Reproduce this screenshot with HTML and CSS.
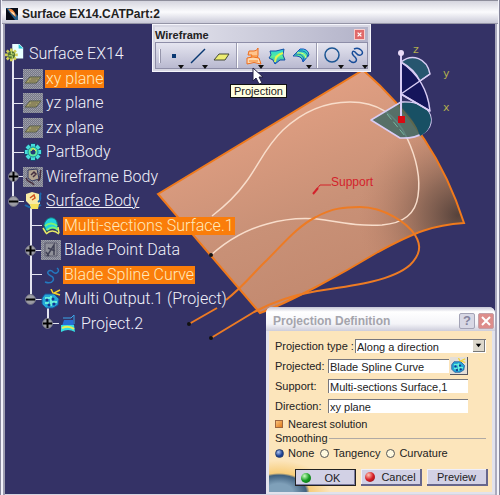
FILE: index.html
```html
<!DOCTYPE html>
<html lang="en">
<head>
<meta charset="utf-8">
<title>Surface EX14.CATPart:2</title>
<link rel="stylesheet" href="styles.css">
</head>
<body>
<svg class="defs" aria-hidden="true">
  <defs>
    <pattern id="dither" width="2" height="2" patternUnits="userSpaceOnUse"><rect width="2" height="2" fill="#77798b"/><rect width="1" height="1" fill="#a2a3aa"/><rect x="1" y="1" width="1" height="1" fill="#94969f"/></pattern>
    <linearGradient id="sheet" x1="0" y1="0" x2="0" y2="1"><stop offset="0" stop-color="#20cfe0"/><stop offset=".5" stop-color="#58ee98"/><stop offset="1" stop-color="#207ee0"/></linearGradient>
    <symbol id="i-plane" viewBox="0 0 20 20"><rect width="20" height="20" fill="url(#dither)"/><path d="M2 14 7 8h11l-5 6z" fill="#a5a06c" stroke="#555843"/><path d="M6 12h7M8 10h7" stroke="#746b4f"/></symbol>
    <symbol id="i-gear" viewBox="0 0 20 20"><path d="M10 1v18M1 10h18M4 4l12 12M16 4 4 16" stroke="#164b70" stroke-width="5"/><path d="M10 2v16M2 10h16M4 4l12 12M16 4 4 16" stroke="#48ddda" stroke-width="4"/><circle cx="10" cy="10" r="5" fill="#62eaa0" stroke="#148a96"/><circle cx="10" cy="10" r="2.500" fill="#263775"/><path d="M8 9l2-3 3 3" stroke="#ece83e" fill="none"/></symbol>
    <symbol id="i-expand" viewBox="0 0 11 11"><circle cx="5.500" cy="5.500" r="5" fill="#9c9ca4" stroke="#6d6d80"/><path d="M1 5.500h9M5.500 1v9" stroke="#000" stroke-width="2"/></symbol>
    <symbol id="i-collapse" viewBox="0 0 11 11"><circle cx="5.500" cy="5.500" r="5" fill="#9c9ca4" stroke="#6d6d80"/><path d="M1 5.500h9" stroke="#000" stroke-width="2"/></symbol>
    <symbol id="i-output" viewBox="0 0 20 20"><path d="M4 5h9l5 5-1 6-5 3H5l-4-4V9z" fill="#25a8d8" stroke="#1b4f96"/><path d="M4 9h5M10 13h6M4 14h4M10 7v10" stroke="#68f0da" stroke-width="2"/><g fill="#16358c"><circle cx="6" cy="11" r="1.500"/><circle cx="12" cy="10" r="1.500"/><circle cx="8" cy="16" r="1.500"/><circle cx="13" cy="15" r="1.500"/></g><path d="M19 1 13 4l6 2M10 0l2 4" stroke="#f5d22b" stroke-width="1.500" fill="none"/></symbol>
  </defs>
</svg>
<div class="window">
  <header class="titlebar">
    <svg class="app-icon" viewBox="0 0 12 12"><rect width="12" height="12" fill="#070b16"/><path d="M0 0h4l8 8v4H9z" fill="#245d87"/><path d="M2 1c4-1 7 2 8 8L6 6z" fill="#f68a3d"/><path d="M4 3l4 2 1 3z" fill="#fff3d2"/></svg>
    <h1>Surface EX14.CATPart:2</h1>
  </header>
  <main class="viewport">
    <svg class="scene" viewBox="5 24 490 466" preserveAspectRatio="xMinYMin meet" role="img" aria-label="Blade surface with projected spline">
      <defs>
        <linearGradient id="skin" x1="230" y1="110" x2="300" y2="300" gradientUnits="userSpaceOnUse"><stop offset="0" stop-color="#e2a083"/><stop offset=".6" stop-color="#c99177"/><stop offset="1" stop-color="#c38a70"/></linearGradient>
        <radialGradient id="shade" cx="458" cy="215" r="100" gradientUnits="userSpaceOnUse"><stop offset="0" stop-color="#4a3a35" stop-opacity=".9"/><stop offset=".35" stop-color="#6e5347" stop-opacity=".65"/><stop offset="1" stop-color="#b88067" stop-opacity="0"/></radialGradient>
        <path id="blade" d="M158 194 363 70Q435 132 464 223C433 225 415 232 378 252C340 275 290 302 260 313Z"/>
      </defs>
      <use href="#blade" fill="url(#skin)"/>
      <use href="#blade" fill="url(#shade)" stroke="#f07a1c" stroke-width="2"/>
      <path d="M211 255C230 238 248 229 267 224C288 218 305 217 325 220C350 224 362 226 382 225C407 223 416 211 418 196C421 176 415 155 407 138C397 116 379 102 350 102C320 102 298 116 283 130C266 146 258 166 246 182C236 196 225 206 212 216" fill="none" stroke="#f8ddcb" stroke-width="1.500"/>
      <path d="M189 324 217 308M226 300C245 285 254 272 267 260C284 243 298 226 316 217C332 208 345 207 360 207C385 207 408 224 415 235C422 246 420 255 410 265C392 281 352 286 317 291C287 296 267 305 254 312L211 338" fill="none" stroke="#ed7b24" stroke-width="2"/>
      <circle cx="211" cy="255" r="2" fill="#111"/><circle cx="189" cy="324" r="2" fill="#111"/><circle cx="211" cy="338" r="2" fill="#111"/>
      <path d="M313 194l5-6" stroke="#d3222b" stroke-width="2"/><path d="M316 190l4-5h11" stroke="#d3222b" fill="none"/>
      <text class="support" x="331" y="186">Support</text>
      <g stroke="#d9cdf5" stroke-width="1.500" stroke-linejoin="round">
        <path d="M401 102 371 120 400 138C420 139 432 130 431 119C430 108 418 101 401 102Z" fill="#25605f" fill-opacity=".72"/>
        <path d="M403 103C421 101 431 111 431 120C430 129 426 133 420 136Q415 120 403 108Z" fill="#185064" stroke="none"/>
        <path d="M401 62Q427 80 430 111L401 94Z" fill="#15155b"/>
        <path d="M401 62C412 53 427 58 430 74L420 81Q414 69 401 62Z" fill="#27566f"/>
        <path d="M430 74 401 94 430 111" fill="none"/>
        <path d="M401 53v64" stroke-width="2"/>
      </g>
      <path d="M387 114 405 136" stroke="#78b7a1" stroke-dasharray="7 3"/>
      <circle cx="401" cy="53" r="3" fill="#eadcf8"/><rect x="398" y="116" width="7" height="7" fill="#d90a12"/>
      <g class="axis"><text x="413" y="53">z</text><text x="443" y="77">y</text><text x="443" y="111">x</text></g>
    </svg>

    <ul class="tree">
      <li class="root"><svg viewBox="0 0 22 22"><path d="M8 0h8l4 4v12H8z" fill="#e8ffff"/><path d="M15 0v5h5" fill="#26c6d7"/><g stroke="#d1cf54" stroke-width="3"><path d="M7 5v14M0 12h14M2 7l10 10M12 7 2 17"/></g><circle cx="7" cy="12" r="4" fill="#4c7136"/><path d="M4 13h4v3M10 11H7V8" stroke="#d8f279" fill="none"/></svg><span>Surface EX14</span></li>
      <li class="l1"><svg><use href="#i-plane"/></svg><span class="selected">xy plane</span></li>
      <li class="l1"><svg><use href="#i-plane"/></svg><span>yz plane</span></li>
      <li class="l1"><svg><use href="#i-plane"/></svg><span>zx plane</span></li>
      <li class="l1"><svg><use href="#i-gear"/></svg><span>PartBody</span></li>
      <li class="l1"><svg class="knob"><use href="#i-expand"/></svg><svg viewBox="0 0 20 20"><rect width="20" height="20" fill="url(#dither)"/><path d="M5 3l9-1 2 10-7 2-4-3z" fill="#b3a591" stroke="#353b61"/><path d="M8 8l3-3 2 2-3 3M3 11c2 6 5 2 8 7M18 3c-2 4 1 8-3 11" stroke="#452f40" stroke-width="1.500" fill="none"/></svg><span>Wireframe Body</span></li>
      <li class="l1"><svg class="knob"><use href="#i-collapse"/></svg><svg viewBox="0 0 20 20"><path d="M3 3l6-2 7 2 1 10-10 1-4-4z" fill="#f8eba5"/><path d="M7 7l4-3 1 3-3 2" stroke="#cf5220" stroke-width="1.500" fill="none"/><path d="M2 14q7 5 16 0M18 2c-3 3 2 6-3 9" stroke="#1c69ae" stroke-width="2" fill="none"/><path d="M7 13h9l-1 5H8z" fill="#f4e15c"/></svg><span class="active">Surface Body</span></li>
      <li class="l2"><svg viewBox="0 0 20 20"><path d="M3 9C5 0 14 0 16 6l1 8q-5-4-12 1z" fill="#20cfe0" stroke="#137b78"/><path d="M4 10q6-5 12 0M6 14q6-5 11 0" stroke="#7cf173" stroke-width="2" fill="none"/><path d="M2 12l3 5M17 11l1 6M5 18q6-6 13 0" stroke="#e9eb65" stroke-width="1.500" fill="none"/></svg><span class="selected">Multi-sections Surface.1</span></li>
      <li class="l2"><svg class="knob"><use href="#i-expand"/></svg><svg viewBox="0 0 20 20"><rect width="20" height="20" fill="url(#dither)"/><path d="M4 3h12v13H4z" fill="#90919a" stroke="#5a5b6c"/><path d="M6 16l7-11v10M7 8l7 3M5 12l3 4" fill="none" stroke="#3f4054" stroke-width="1.500"/></svg><span>Blade Point Data</span></li>
      <li class="l2"><svg viewBox="0 0 20 20"><path d="M4 17C12 20 15 13 10 11C3 8 9 3 12 7C15 10 20 6 16 3" fill="none" stroke="#247ac0" stroke-width="1.500"/></svg><span class="selected">Blade Spline Curve</span></li>
      <li class="l2"><svg class="knob"><use href="#i-collapse"/></svg><svg><use href="#i-output"/></svg><span>Multi Output.1 (Project)</span></li>
      <li class="l3"><svg class="knob"><use href="#i-expand"/></svg><svg viewBox="0 0 20 20"><path d="M5 4h8M13 4l3-3v9" stroke="#3ba5e8" fill="none"/><path d="M6 6h9l1 6H4z" fill="#276ed6"/><path d="M3 11h13l1 7q-7-4-14 0z" fill="#36dde1"/><path d="M4 14q7-3 12 1" stroke="#e6ef54" stroke-width="2" fill="none"/></svg><span>Project.2</span></li>
    </ul>

    <section class="toolbar" aria-label="Wireframe">
      <header><h2>Wireframe</h2><button class="tool-close" aria-label="Close toolbar"><svg viewBox="0 0 8 8"><path d="M1 1l6 6M7 1 1 7" stroke="#fff" stroke-width="2"/></svg></button></header>
      <div class="tools">
        <i class="grip"></i>
        <button class="drop" aria-label="Point"><svg viewBox="0 0 18 18"><rect x="8" y="7" width="4" height="4" fill="#093872"/></svg></button>
        <button class="drop" aria-label="Line"><svg viewBox="0 0 18 18"><path d="M3 16 17 2" stroke="#093872" stroke-width="1.500"/></svg></button>
        <button aria-label="Plane"><svg viewBox="0 0 18 18"><path d="M2 13 7 7h10l-4 6z" fill="#eded72" stroke="#444936"/></svg></button>
        <i class="rule"></i>
        <button class="drop" aria-label="Projection"><svg viewBox="0 0 18 18"><path d="M5 4h5q3 0 4-3v7l-1 4H6l2-4H4z" fill="#ffc48d" stroke="#ed6d1d"/><path d="M3 11q6-2 12 0l2 6q-7-3-14 0z" fill="#ffd9b0" stroke="#ed6d1d"/><path d="M7 9h6M5 14h9" stroke="#f58225"/></svg></button>
        <button aria-label="Intersection"><svg viewBox="0 0 18 18"><path d="M2 4l6 0 8-2-1 6 2 5-5 0-5 4-2-4-4-2 2-3z" fill="url(#sheet)" stroke="#1750a6"/><path d="M7 15q0-7 8-9" stroke="#dff450" stroke-width="2" fill="none"/></svg></button>
        <button class="drop" aria-label="Parallel curve"><svg viewBox="0 0 18 18"><path d="M1 9 8 2q8-1 9 6l-6 7q-1-7-10-6z" fill="url(#sheet)" stroke="#1750b9"/><path d="M3 7q9-1 9 7M7 4q8-1 9 6" stroke="#1d65be" fill="none"/><path d="M5 6q8-1 9 5" stroke="#edf774" fill="none"/></svg></button>
        <i class="rule"></i>
        <button class="drop" aria-label="Circle"><svg viewBox="0 0 18 18"><circle cx="8" cy="8" r="7" fill="none" stroke="#1b5593" stroke-width="1.500"/></svg></button>
        <button class="drop" aria-label="Spline"><svg viewBox="0 0 18 18"><path d="M1 13C6 18 11 14 7 10C2 6 5 2 8 6C12 11 17 6 13 3Q10 0 6 2" fill="none" stroke="#174c99" stroke-width="1.500"/></svg></button>
      </div>
    </section>
    <svg class="cursor" viewBox="0 0 12 18"><path d="M1 1v13l3-3 3 6 3-1-3-6h4z" fill="#fff" stroke="#252344"/></svg>
    <div class="tooltip" role="tooltip">Projection</div>

    <form class="dialog" aria-labelledby="dialog-title">
      <header><h2 id="dialog-title">Projection Definition</h2><button type="button" class="help" aria-label="Help">?</button><button type="button" class="close" aria-label="Close"><svg viewBox="0 0 12 12"><path d="M2 2l8 8M10 2l-8 8" stroke="#fff" stroke-width="2"/></svg></button></header>
      <div class="body">
        <div class="row type"><label for="type">Projection type :</label><div class="select"><select id="type"><option>Along a direction</option></select><svg viewBox="0 0 12 12"><path d="M3 4h6L6 8z"/></svg></div></div>
        <div class="row"><label for="projected">Projected:</label><input id="projected" value="Blade Spline Curve"><button type="button" class="pick" aria-label="Multi output"><svg viewBox="0 0 20 20"><use href="#i-output"/></svg></button></div>
        <div class="row"><label for="support">Support:</label><input id="support" value="Multi-sections Surface,1"></div>
        <div class="row"><label for="direction">Direction:</label><input id="direction" value="xy plane"></div>
        <label class="check"><input type="checkbox" checked>Nearest solution</label>
        <fieldset><legend>Smoothing</legend><label><input type="radio" name="smooth" checked>None</label><label><input type="radio" name="smooth">Tangency</label><label><input type="radio" name="smooth">Curvature</label></fieldset>
        <footer><button type="submit" class="ok"><i class="dot green"></i>OK</button><button type="button"><i class="dot red"></i>Cancel</button><button type="button">Preview</button></footer>
      </div>
    </form>
  </main>
</div>
</body>
</html>
```
FILE: styles.css
```css
* { box-sizing: border-box; }
body { margin: 0; font-family: "Liberation Sans", Arial, sans-serif; font-size: 11px; color: #222; background: #b9b9c9; }
h1, h2, ul, fieldset { margin: 0; padding: 0; }
button { font: inherit; color: inherit; padding: 0; border: 0; }
svg { display: block; overflow: visible; }
.defs { position: absolute; width: 0; height: 0; }

.window { display: flex; flex-direction: column; height: 100vh; padding: 0 5px 1px; background: linear-gradient(90deg, #85859a 0 1px, #f2f2fa 1px 3px, #9d9db0 3px 5px, transparent 5px calc(100% - 5px), #aaaabd calc(100% - 5px) calc(100% - 3px), #f3f3fa calc(100% - 3px) calc(100% - 1px), #85859a calc(100% - 1px)), #d5d5e0; }
.titlebar { flex: none; display: flex; align-items: center; gap: 4px; height: 24px; margin: 0 -3px; padding: 3px 4px 0; background: linear-gradient(#8e8e9c 0 1px, #d5d5df 1px, #fbfbfd 50%, #ccccda 94%, #77778a); }
.app-icon { width: 12px; height: 12px; }
h1 { font-size: 12px; line-height: 18px; }
.viewport { position: relative; flex: 1; min-height: 0; overflow: hidden; background: #343266; }
.scene { position: absolute; inset: 0; width: 100%; height: 100%; }
.support { font: 12px "Liberation Sans", sans-serif; fill: #d3222b; }
.axis { font: 11px "DejaVu Sans", sans-serif; fill: #b1ad4d; }

.tree { position: relative; z-index: 0; display: grid; grid-auto-rows: 1fr; width: max-content; height: 294px; margin-top: 18px; list-style: none; font: 300 16px/18px Roboto, sans-serif; color: #f1f1fa; }
.tree li { position: relative; display: flex; align-items: center; gap: 2px; }
.tree li > svg { flex: none; width: 20px; height: 20px; }
.tree .l1 { padding-left: 18px; }
.tree .l2 { padding-left: 36px; }
.tree .l3 { padding-left: 53px; }
.tree li::before { content: ""; position: absolute; z-index: -1; top: -12px; bottom: 12px; width: 10px; border: solid #e4e4f0; border-width: 0 0 1px 2px; }
.tree .root::before { display: none; }
.tree .l1::before { left: 7px; }
.tree .l2::before { left: 25px; }
.tree .l3::before { left: 42px; }
.tree li > .knob { position: absolute; width: 11px; height: 11px; }
.l1 .knob { left: 3px; }
.l2 .knob { left: 20px; }
.l3 .knob { left: 37px; }
.tree span { padding: 0 1px; }
.tree .root span { padding-left: 2px; }
.tree .selected { background: #fa7d0a; color: #ffe9bb; }
.tree .active { text-decoration: underline; text-decoration-thickness: 1px; }

.toolbar { position: absolute; left: 147px; top: 0; width: 219px; height: 48px; padding: 2px; background: #d7d7e3; border: 1px solid #f5f5fc; }
.toolbar header { display: flex; justify-content: space-between; align-items: center; height: 15px; padding: 0 3px 0 0; background: linear-gradient(90deg, #e5e5ee, #b3b3c9); }
.toolbar h2 { font-size: 11px; line-height: 14px; }
.tool-close { width: 11px; height: 11px; padding: 2px; background: #e0696a; border: 1px solid #f7cfcf; }
.tools { display: flex; align-items: center; gap: 6px; height: 27px; border: 1px solid #8e8ea8; background: linear-gradient(#e5e5f0, #b9b9d0); }
.tools button { position: relative; width: 18px; height: 20px; background: none; }
.tools button svg { width: 18px; height: 18px; }
.tools .drop::after { content: ""; position: absolute; right: -2px; bottom: -3px; border: solid transparent; border-width: 4px 3px 0; border-top-color: #111; }
.grip { width: 2px; height: 14px; margin-left: 3px; margin-right: -3px; background: #f8f8fc; border-right: 1px solid #9595ab; }
.rule { width: 2px; height: 25px; background: #fff; border-left: 1px solid #9b9bb1; }
.cursor { position: absolute; left: 247px; top: 43px; width: 12px; height: 18px; }
.tooltip { position: absolute; left: 225px; top: 60px; padding: 0 3px; line-height: 12px; color: #222; background: #ffffe1; border: 1px solid #111; }

.dialog { position: absolute; right: 0; bottom: 0; width: 229px; padding: 0 3px 2px; border-radius: 6px 6px 0 0; background: #e2e2ec; }
.dialog header { display: flex; align-items: center; gap: 3px; height: 24px; padding: 3px 1px 0 7px; margin: 0 -3px; border-radius: 6px 6px 0 0; background: linear-gradient(#c5c5d5, #fff 20%, #f4f4f8 70%, #cdcddb); }
.dialog h2 { flex: 1; font-size: 12px; color: #a4a4ac; }
.dialog header button { width: 16px; height: 16px; border: 1px solid #a3a3b6; border-radius: 2px; }
.dialog .help { background: #d8d8e5; color: #84849d; font-weight: bold; font-size: 13px; line-height: 14px; }
.dialog .close { background: #dd8d8b; border-color: #c4a0a8; padding: 1px; }
.body { padding: 5px 6px 6px; background: radial-gradient(ellipse 34px 21px at 10px 100%, #7fa0b9 0 40%, #41617e 80%, #f7cd7b 90%, transparent 150%), #fce5bb; }
.row { display: flex; align-items: center; height: 20px; padding-right: 18px; }
.row.type { padding-right: 0; }
.row label { width: 53px; }
.row.type label { width: 80px; white-space: nowrap; }
.row input, .row select { flex: 1; min-width: 0; width: 100%; height: 14px; padding: 0 1px; font: 11px "Liberation Sans", sans-serif; color: #222; background: #fff; border: solid #77777d; border-width: 1px 0 0 1px; border-radius: 0; appearance: none; }
.select { position: relative; flex: 1; display: flex; }
.select svg { position: absolute; right: 1px; top: 1px; width: 12px; height: 12px; background: #ddd8cc; border: solid #777; border-width: 0 1px 1px 0; pointer-events: none; }
.pick { width: 18px; height: 18px; margin-left: 1px; padding: 1px; background: #e4dfd7; border: solid #55555f; border-width: 0 1px 1px 0; }
.pick svg { width: 15px; height: 15px; }
.check { display: flex; align-items: center; gap: 5px; height: 16px; }
.check input { appearance: none; width: 8px; height: 8px; margin: 0; background: linear-gradient(135deg, #f9c27b, #e17a1c); border: 1px solid #9c6640; }
fieldset { position: relative; display: flex; align-items: center; gap: 6px; height: 28px; padding-top: 14px; border: 0; }
fieldset::before { content: ""; position: absolute; left: 54px; right: 0; top: 6px; height: 1px; background: #b0aaa4; }
legend { position: absolute; top: 0; padding: 0; line-height: 13px; }
fieldset label { display: flex; align-items: center; gap: 4px; }
fieldset input { appearance: none; width: 9px; height: 9px; margin: 0; border: 1px solid #555; border-radius: 50%; background: #fff9df; }
fieldset input:checked { background: radial-gradient(circle at 35% 30%, #b3c9f3, #193d91 60%); border-color: #28406e; }
.body footer { display: flex; justify-content: flex-end; gap: 5px; padding-top: 9px; margin-right: -2px; }
.body footer button { display: flex; align-items: center; justify-content: center; gap: 6px; width: 61px; height: 17px; background: #d2d1e5; border: solid #66668c; border-width: 0 2px 2px 0; box-shadow: inset 1px 1px #efeff9; }
.body footer .ok { gap: 14px; padding-right: 10px; border: 1px solid #222; box-shadow: inset -1px -1px #7a7aa0; }
.dot { width: 10px; height: 10px; border-radius: 50%; }
.green { background: radial-gradient(circle at 35% 30%, #c8ffc0, #159b22 50%, #096112); }
.red { background: radial-gradient(circle at 35% 30%, #ffc5b5, #d61c24 50%, #79131c); }
```
